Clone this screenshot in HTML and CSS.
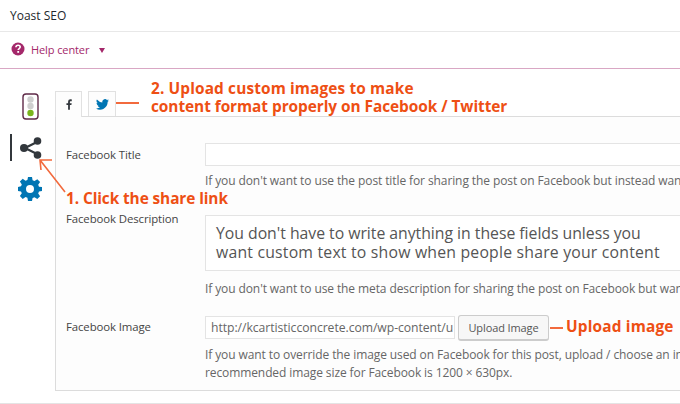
FILE: index.html
```html
<!DOCTYPE html>
<html lang="en">
<head>
<meta charset="utf-8">
<title>Yoast SEO</title>
<link rel="stylesheet" href="styles.css">
</head>
<body>
<div class="page">
  <header class="title">Yoast SEO</header>
  <div class="help">
    <svg class="help-icon" viewBox="0 0 14 14" width="14" height="14"><circle cx="7" cy="7" r="6.5" fill="#a4286a"/><path d="M4.9 5.3C5 4 6 3.3 7.1 3.3 8.4 3.3 9.2 4.1 9.2 5.1 9.2 6.5 7.3 6.6 7.2 8" fill="none" stroke="#fff" stroke-width="1.6"/><rect x="6.3" y="9" width="1.8" height="1.8" fill="#fff"/></svg>
    <span class="help-text">Help center</span>
    <span class="caret"></span>
  </div>
  <div class="main">
    <nav class="side">
      <svg class="light" viewBox="0 0 17 27" width="17" height="27"><rect x="1" y="1" width="15" height="25" rx="3" fill="#fff" stroke="#5f2a48" stroke-width="1.4"/><circle cx="8.500" cy="6.500" r="3.200" fill="#cfcfcf"/><circle cx="8.500" cy="13" r="3.200" fill="#cfcfcf"/><circle cx="8.500" cy="20" r="3.200" fill="#7ab51d"/></svg>
      <div class="share-item">
        <svg viewBox="0 0 22 22" width="22" height="22"><path d="M17 5 5 11l12 6" fill="none" stroke="#32373c" stroke-width="2.200"/><circle cx="17.500" cy="4" r="3.800" fill="#32373c"/><circle cx="4" cy="11" r="4" fill="#32373c"/><circle cx="17.500" cy="18" r="3.800" fill="#32373c"/></svg>
      </div>
      <svg class="gear" viewBox="0 0 24 24" width="24" height="24"><path fill="#0075b3" fill-rule="evenodd" d="M10 0h4l.6 3.300 1.900.8 2.800-1.900 2.800 2.800-1.900 2.800.8 1.900L24 10v4l-3 .6-.8 1.900 1.900 2.800-2.800 2.800-2.800-1.900-1.900.8L14 24h-4l-.6-3.200-1.900-.8-2.800 1.900-2.800-2.800 1.900-2.800-.8-1.900L0 14v-4l3-.7.8-1.900-1.900-2.800 2.800-2.800 2.800 1.900 1.900-.8zM12 8a4 4 0 1 0 0 8 4 4 0 0 0 0-8z"/></svg>
    </nav>
    <section class="box">
      <div class="tabs">
        <div class="tab active"><svg viewBox="0 0 8 14" width="6" height="11"><path fill="#32373c" d="M5.200 14V7.700h2l.4-2.500H5.200V3.700c0-.7.3-1.200 1.300-1.200h1.200V.2C7.400.1 6.800 0 6 0 4.200 0 2.800 1.100 2.800 3.300v1.900H.6v2.500h2.200V14z"/></svg></div>
        <div class="tab"><svg viewBox="0 0 24 20" width="13" height="11"><path fill="#0075b3" d="M24 2.400a9.800 9.800 0 0 1-2.800.8A5 5 0 0 0 23.300.4a9.800 9.800 0 0 1-3.100 1.200 4.900 4.900 0 0 0-8.400 4.500A14 14 0 0 1 1.700.9a4.900 4.900 0 0 0 1.500 6.600 4.900 4.900 0 0 1-2.200-.6v.1a4.900 4.900 0 0 0 3.900 4.800 5 5 0 0 1-2.200.1 4.900 4.900 0 0 0 4.600 3.400A9.900 9.900 0 0 1 0 17.300 13.900 13.900 0 0 0 7.500 19.500c9.100 0 14-7.500 14-14v-.6A10 10 0 0 0 24 2.400z"/></svg></div>
      </div>
      <div class="panel">
        <div class="row row-title">
          <label class="lbl">Facebook Title</label>
          <div class="field">
            <div class="input tall"></div>
            <p class="hint">If you don't want to use the post title for sharing the post on Facebook but instead want another title there, write it here.</p>
          </div>
        </div>
        <div class="row row-desc">
          <label class="lbl">Facebook Description</label>
          <div class="field">
            <div class="input area"></div>
            <p class="hint">If you don't want to use the meta description for sharing the post on Facebook but want another description there, write it here.</p>
          </div>
        </div>
        <div class="row row-image">
          <label class="lbl lbl-image">Facebook Image</label>
          <div class="field">
            <div class="upload">
              <div class="input url">http://kcartisticconcrete.com/wp-content/u</div>
              <div class="button">Upload Image</div>
            </div>
            <p class="hint two">If you want to override the image used on Facebook for this post, upload / choose an image here. The<br>recommended image size for Facebook is 1200 × 630px.</p>
          </div>
        </div>
      </div>
    </section>
  </div>
  <div class="next"></div>

  <div class="note n-upload"><span class="up1">2. Upload custom images to make</span><br><span class="up2">content format properly on Facebook / Twitter</span></div>
  <div class="note n-click">1. Click the share link</div>
  <div class="note n-image">Upload image</div>
  <div class="callout"><span class="co1">You don't have to write anything in these fields unless you</span><br><span class="co2">want custom text to show when people share your content</span></div>
  <span class="dash d-tab"></span>
  <span class="dash d-img"></span>
  <svg class="arrow" viewBox="0 0 30 40" width="30" height="40"><path d="M26 33 1 1M13 1H1l1 10" fill="none" stroke="#f26a3d" stroke-width="1.600"/></svg>
</div>
</body>
</html>
```

FILE: styles.css
```css
* { box-sizing: border-box; }
html, body { margin: 0; padding: 0; background: #fff; }
.page {
  position: relative;
  width: 680px;
  height: 404px;
  overflow: hidden;
  font-family: "Open Sans", "Noto Sans", sans-serif;
  color: #555;
  font-size: 11px;
}
.title {
  height: 32px;
  border-bottom: 1px solid #e8e8e8;
  padding: 8px 0 0 10px;
  font-size: 12px;
  line-height: 16px;
  color: #23282d;
}
.help {
  height: 37px;
  border-bottom: 1px solid #d9a7c4;
  padding: 0 0 2px 11px;
  display: flex;
  align-items: center;
  color: #a4286a;
}
.help-icon { display: block; }
.help-text { margin-left: 6px; font-size: 11px; letter-spacing: -.1px; }
.caret {
  margin: 2px 0 0 10px;
  width: 0;
  height: 0;
  border-left: 3.500px solid transparent;
  border-right: 3.500px solid transparent;
  border-top: 5px solid #a4286a;
}
.main { display: flex; padding-top: 22px; }
.side {
  width: 55px;
  flex: none;
  display: flex;
  flex-direction: column;
  align-items: flex-start;
  padding: 2px 0 0 22px;
}
.light { display: block; }
.share-item {
  margin: 14px 0 0 -12px;
  border-left: 2px solid #32373c;
  height: 27px;
  padding-left: 8px;
  display: flex;
  align-items: center;
}
.gear { display: block; margin: 16px 0 0 -4px; }
.box { flex: 1; min-width: 0; }
.tabs { display: flex; gap: 6px; height: 25px; }
.tab {
  height: 25px;
  border: 1px solid #e1e1e1;
  border-bottom: 0;
  display: flex;
  align-items: center;
  justify-content: center;
  background: #fdfdfd;
}
.tab.active {
  width: 27px;
  height: 26px;
  position: relative;
  z-index: 1;
}
.tab:not(.active) { width: 28px; }
.panel {
  width: 640px;
  height: 275px;
  border: 1px solid #dcdcdc;
  border-right: 0;
  background: #fdfdfd;
  padding: 26px 0 0 10px;
}
.row { display: flex; }
.lbl {
  width: 139px;
  flex: none;
  font-size: 11.400px;
  line-height: 14px;
  color: #444;
  font-weight: 500;
  letter-spacing: -.1px;
  padding-top: 5px;
}
.field { flex: 1; min-width: 0; }
.input { background: #fff; border: 1px solid #e4e4e4; }
.tall { height: 23px; width: 100%; }
.hint {
  margin: 0;
  font-size: 12px;
  line-height: 18px;
  color: #666;
  white-space: nowrap;
  letter-spacing: -.1px;
  padding-top: 6px;
}
.row-desc { margin-top: 25px; }
.row-desc .lbl { padding-top: 0; margin-top: -3px; }
.area { height: 56px; }
.row-desc .hint { padding-top: 9px; }
.row-image { margin-top: 18px; }
.lbl-image { padding-top: 4px; }
.upload { display: flex; align-items: center; gap: 3px; height: 23px; }
.url {
  width: 250px;
  height: 23px;
  padding: 0 5px;
  overflow: hidden;
  white-space: nowrap;
  font-size: 12.200px;
  line-height: 21px;
  letter-spacing: -.05px;
  color: #666;
}
.button {
  width: 91px;
  height: 26px;
  flex: none;
  border: 1px solid #ccc;
  border-bottom-width: 2px;
  border-radius: 3px;
  background: #f7f7f7;
  font-size: 11px;
  line-height: 23px;
  text-align: center;
  letter-spacing: -.1px;
}
.hint.two { padding-top: 7px; }
.next { position: absolute; left: 0; top: 403px; width: 680px; height: 1px; background: #e4e4e4; }
.note {
  position: absolute;
  color: #ee4f14;
  font-weight: 700;
  font-size: 15.400px;
  line-height: 18px;
  white-space: nowrap;
}
.up1 { letter-spacing: .13px; }
.up2 { letter-spacing: -.05px; }
.n-upload { left: 151px; top: 80px; }
.n-click { left: 66px; top: 190px; letter-spacing: -.09px; }
.n-image { left: 566px; top: 318px; letter-spacing: .17px; }
.callout {
  position: absolute;
  left: 216px;
  top: 224px;
  font-size: 15.800px;
  line-height: 19px;
  color: #555;
  white-space: nowrap;
}
.co1 { letter-spacing: -.03px; }
.co2 { letter-spacing: .2px; }
.dash { position: absolute; height: 2px; background: #f26a3d; }
.d-tab { left: 116px; top: 102px; width: 23px; }
.d-img { left: 550px; top: 327px; width: 13px; }
.arrow { position: absolute; left: 39px; top: 159px; }
```
